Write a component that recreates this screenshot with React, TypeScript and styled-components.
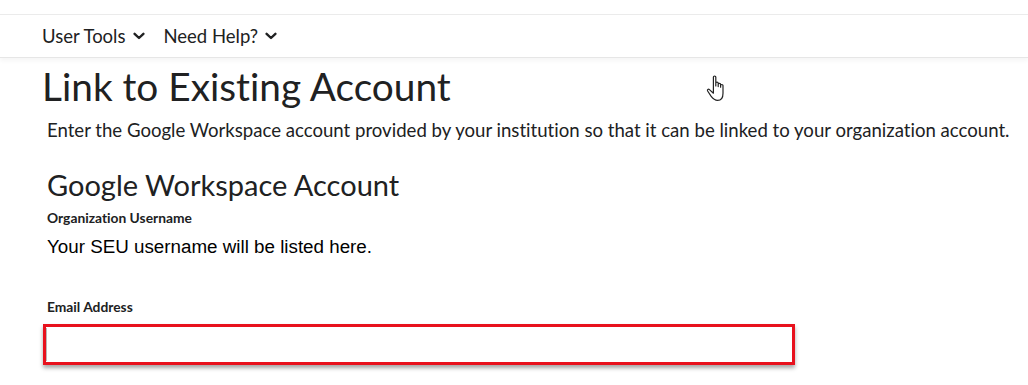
import React from "react";
import styled, { createGlobalStyle } from "styled-components";

const Global = createGlobalStyle`
  html, body { margin: 0; padding: 0; background: #ffffff; }
  body {
    font-family: Lato, "Noto Sans", sans-serif;
    color: #202122;
    font-variant-ligatures: no-common-ligatures;
  }
`;

const Page = styled.div`
  position: relative;
  width: 1028px;
  height: 385px;
  overflow: hidden;
  padding-top: 14px;
  box-sizing: border-box;
`;

const NavBar = styled.nav`
  height: 44px;
  border-top: 1px solid #ebebeb;
  border-bottom: 1px solid #e6e6e6;
  box-shadow: 0 3px 4px rgba(0, 0, 0, 0.04);
  display: flex;
  align-items: center;
  gap: 19px;
  padding-left: 42px;
  box-sizing: border-box;
`;

const NavItem = styled.span`
  font-size: 18.5px;
  color: #202122;
  display: flex;
  align-items: center;
  gap: 7px;
`;

const Chevron = () => (
  <svg width="12" height="8" viewBox="0 0 12 8">
    <path d="M1.6 1.8 L6 6 L10.4 1.8" fill="none" stroke="#202122" strokeWidth="2.4" strokeLinecap="round" strokeLinejoin="round" />
  </svg>
);

const Main = styled.main`
  padding-left: 42px;
`;

const Title = styled.h1`
  margin: 5px 0 0;
  font-weight: 400;
  font-size: 38.8px;
  line-height: 46px;
  color: #202122;
`;

const Body = styled.div`
  padding-left: 5px;
`;

const Description = styled.p`
  margin: 8px 0 0;
  font-size: 18.6px;
  line-height: 26px;
  color: #202122;
  white-space: nowrap;
`;

const SectionTitle = styled.h2`
  margin: 25px 0 0;
  font-weight: 400;
  font-size: 29px;
  line-height: 34px;
  color: #202122;
`;

const Label = styled.div<{ $gap: number }>`
  margin-top: ${(p) => p.$gap}px;
  font-size: 13.8px;
  font-weight: 700;
  line-height: 16px;
  color: #202122;
`;

const Value = styled.div`
  margin-top: 10px;
  font-family: "Liberation Sans", Arial, sans-serif;
  font-size: 18.8px;
  line-height: 22px;
  color: #000;
`;

const InputFrame = styled.div`
  margin-top: 9px;
  margin-left: -4px;
  width: 752px;
  height: 41px;
  box-sizing: border-box;
  border: 3px solid #e8111d;
  box-shadow: 0 3px 4px rgba(0, 0, 0, 0.35);
  background: #fff;
  display: flex;
`;

const Input = styled.input`
  flex: 1;
  border: none;
  border-left: 1px solid #b8b8b8;
  outline: none;
  background: #fff;
  margin: 1px 0;
`;

const Cursor = styled.svg`
  position: absolute;
  left: 705px;
  top: 74px;
`;

export default function App() {
  return (
    <Page>
      <Global />
      <NavBar>
        <NavItem>
          User Tools <Chevron />
        </NavItem>
        <NavItem>
          Need Help? <Chevron />
        </NavItem>
      </NavBar>
      <Main>
        <Title>Link to Existing Account</Title>
        <Body>
          <Description>
            Enter the Google Workspace account provided by your institution so that it can be linked to your organization account.
          </Description>
          <SectionTitle>Google Workspace Account</SectionTitle>
          <Label $gap={8}>Organization Username</Label>
          <Value>Your SEU username will be listed here.</Value>
          <Label $gap={41}>Email Address</Label>
          <InputFrame>
            <Input aria-label="Email Address" />
          </InputFrame>
        </Body>
      </Main>
      <Cursor width="24" height="30" viewBox="0 0 20 25">
        <path
          d="M7 2.5 C7 1.4 9 1.4 9 2.5 L9 10 L9 7.5 C9 6.5 11 6.5 11 7.5 L11 10.5 L11 8.5 C11 7.5 13 7.5 13 8.5 L13 11 L13 9.5 C13 8.5 15 8.5 15 9.5 L15 16 C15 19.5 13.5 22 10.5 22 C8 22 6.5 20.5 5 18.5 L2.2 14.2 C1.6 13.2 2.8 12.2 3.7 13 L7 16 Z"
          fill="#fff"
          stroke="#222"
          strokeWidth="1"
          strokeLinejoin="round"
        />
      </Cursor>
    </Page>
  );
}
